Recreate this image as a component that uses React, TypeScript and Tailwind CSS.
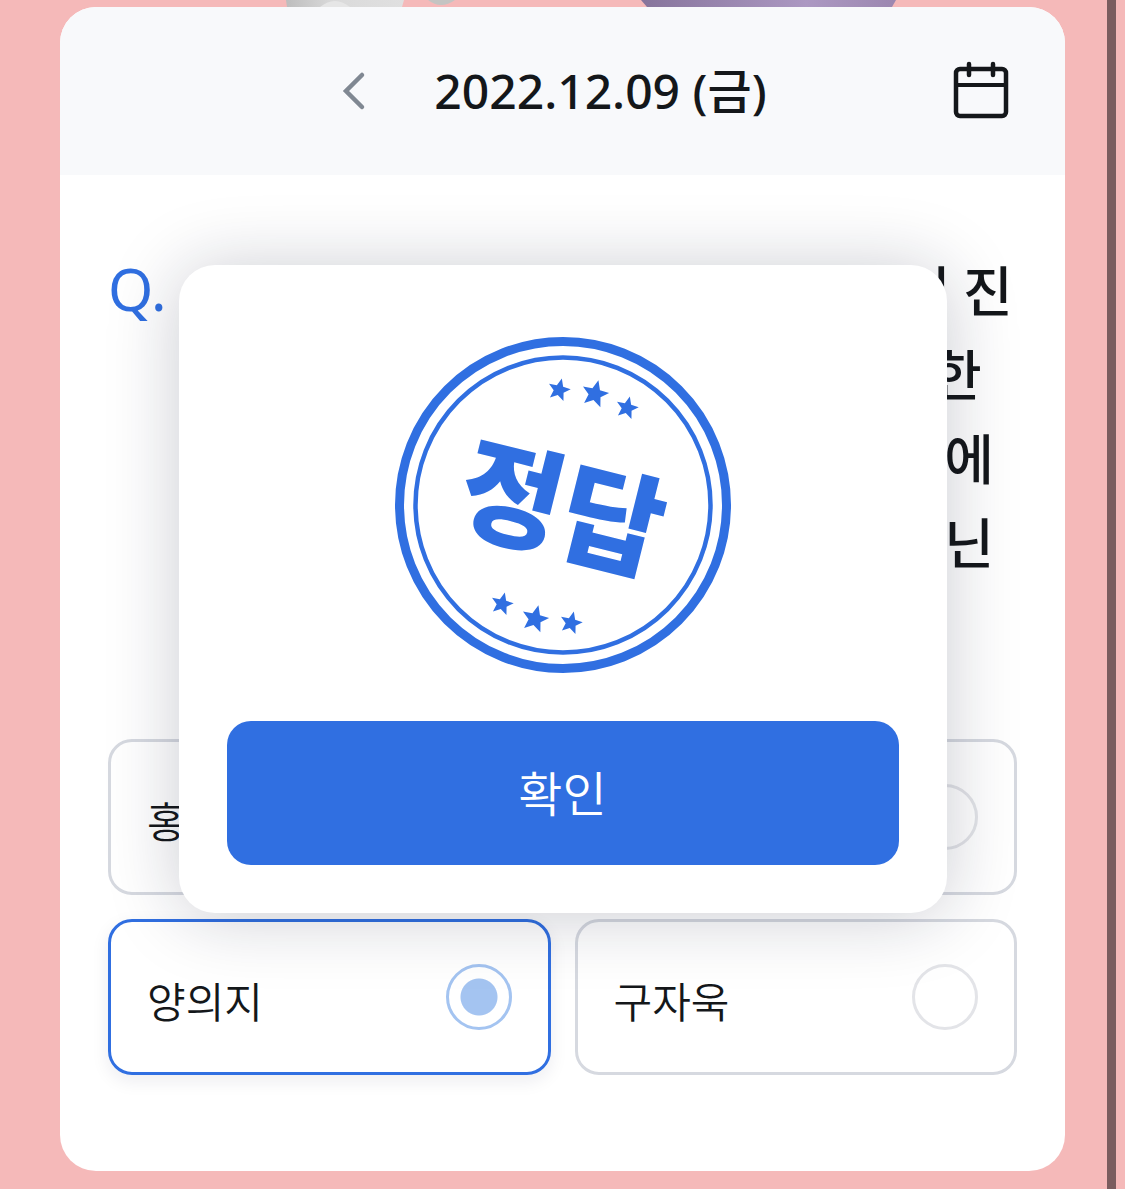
import React, { useState } from 'react';

const STAR = 'M0,-12 L3.3,-4.2 L11.4,-3.7 L5.2,1.6 L7.1,9.7 L0,5.3 L-7.1,9.7 L-5.2,1.6 L-11.4,-3.7 L-3.3,-4.2 Z';

const stars = [
  { x: 164, y: 53, scale: 0.98 },
  { x: 200, y: 57, scale: 1.18 },
  { x: 232, y: 71, scale: 0.98 },
  { x: 107, y: 267, scale: 0.98 },
  { x: 140, y: 282, scale: 1.18 },
  { x: 176, y: 286, scale: 0.98 },
];

const question = [
  '9일 오후 열린 골든글러브시상식이 진',
  '행되었다 최고의 선수들이 수상을 한',
  '가운데 아래 네명 중에 외야수 부문에',
  '서 황금장갑을 받은 올해 선수가 아닌',
  '선수는 누구일까요?',
];

const options = ['홍창기', '이정후', '양의지', '구자욱'];

function Balls() {
  return (
    <svg className="mx-auto block h-[7px] w-[1125px]" viewBox="0 0 1125 7" aria-hidden="true">
      <defs>
        <linearGradient id="gray" x1="0" x2="1">
          <stop offset="0" stopColor="#bdbdbd" />
          <stop offset="0.4" stopColor="#dadada" />
          <stop offset="1" stopColor="#e0e0e0" />
        </linearGradient>
        <linearGradient id="purple" x1="0" x2="1">
          <stop offset="0" stopColor="#86749b" />
          <stop offset="0.65" stopColor="#ac98c2" />
          <stop offset="1" stopColor="#9c87b0" />
        </linearGradient>
      </defs>
      <path d="M286 0 H404 L402 7 H287 Z" fill="url(#gray)" />
      <path d="M320 7 Q335 -5 350 7 Z" fill="#e6e6e6" />
      <path d="M428 0 Q441 10 455 0 Z" fill="#c4c4c2" />
      <path d="M641 0 H896 L892 7 H647 Z" fill="url(#purple)" />
    </svg>
  );
}

function Stamp() {
  return (
    <svg className="mx-auto block size-[336px]" viewBox="0 0 336 336" fill="#306fe1">
      <circle cx="168" cy="168" r="163.5" fill="none" stroke="#306fe1" strokeWidth="9" />
      <circle cx="168" cy="168" r="147.5" fill="none" stroke="#306fe1" strokeWidth="4.5" />
      {stars.map((s) => (
        <path key={`${s.x}-${s.y}`} d={STAR} transform={`translate(${s.x} ${s.y}) rotate(14) scale(${s.scale})`} />
      ))}
      <text
        className="font-['Noto_Sans_CJK_KR',sans-serif] text-[112px] font-black"
        textAnchor="middle"
        transform="translate(167 172) rotate(14)"
        y="41"
      >
        정답
      </text>
    </svg>
  );
}

function App() {
  const [picked, setPicked] = useState('양의지');

  return (
    <div className="relative min-h-screen overflow-hidden bg-[#f5b9b9] pb-[19px] font-['Noto_Sans','Noto_Sans_CJK_KR',sans-serif] text-[#14171a]">
      <Balls />
      <main className="mx-[60px] overflow-hidden rounded-[36px] bg-white">
        <header className="grid h-[168px] grid-cols-[1fr_auto_1fr] items-center bg-[#f8f9fb] px-12">
          <div className="col-start-2 flex items-center gap-16 pr-5">
            <button className="p-1" aria-label="이전">
              <svg className="h-10 w-6" viewBox="0 0 24 40" fill="none" stroke="#808892" strokeWidth="4.5" strokeLinecap="round">
                <path d="M20 4 L4 20 L20 36" />
              </svg>
            </button>
            <h1 className="text-[48px] leading-[72px] font-medium">2022.12.09 (금)</h1>
          </div>
          <button className="mr-1 justify-self-end" aria-label="달력">
            <svg className="size-16" viewBox="0 0 64 64" fill="none" stroke="#14171a" strokeWidth="4.5" strokeLinecap="round">
              <rect x="7" y="10" width="50" height="47" rx="4" />
              <path d="M20 5 V16 M44 5 V16" />
              <path d="M8 26 H56" strokeWidth="4" strokeLinecap="butt" />
            </svg>
          </button>
        </header>

        <section className="px-12 pt-[72px] pb-24">
          <div className="mb-[72px] flex">
            <span className="w-20 shrink-0 text-[58px] leading-[84px] text-[#306fe1]">Q.</span>
            <p className="font-['Noto_Sans_CJK_KR',sans-serif] text-[54px] leading-[84px] font-medium whitespace-nowrap">
              {question.map((line) => (
                <span key={line} className="block">{line}</span>
              ))}
            </p>
          </div>
          <div className="grid grid-cols-2 gap-6">
            {options.map((name) => (
              <label
                key={name}
                className="flex h-[156px] items-center justify-between rounded-3xl border-3 border-[#d6d9e0] bg-white px-9 has-checked:border-[#306fe1] has-checked:shadow-[0_6px_18px_rgba(20,30,60,0.08)]"
              >
                <span className="pt-1 font-['Noto_Sans_CJK_KR',sans-serif] text-[42px] font-[350]">{name}</span>
                <input
                  type="radio"
                  name="answer"
                  checked={picked === name}
                  onChange={() => setPicked(name)}
                  className="size-[66px] appearance-none rounded-full border-3 border-[#e3e4e8] bg-white checked:border-[#a4c4f1] checked:bg-[radial-gradient(#a4c4f1_18px,transparent_19px)]"
                />
              </label>
            ))}
          </div>
        </section>
      </main>

      <div className="absolute inset-x-0 top-[265px] flex justify-center">
        <div role="dialog" className="w-[768px] rounded-[36px] bg-white px-12 pt-[72px] pb-12 shadow-[0_3px_72px_rgba(20,25,50,0.22)]">
          <Stamp />
          <button className="mt-12 h-36 w-full rounded-3xl bg-[#306fe1] pb-1 font-['Noto_Sans_CJK_KR',sans-serif] text-[48px] font-[350] text-white">확인</button>
        </div>
      </div>

      <div className="absolute inset-y-0 right-[9px] w-[9px] bg-[#7a5c5e]" />
    </div>
  );
}

export default App;
